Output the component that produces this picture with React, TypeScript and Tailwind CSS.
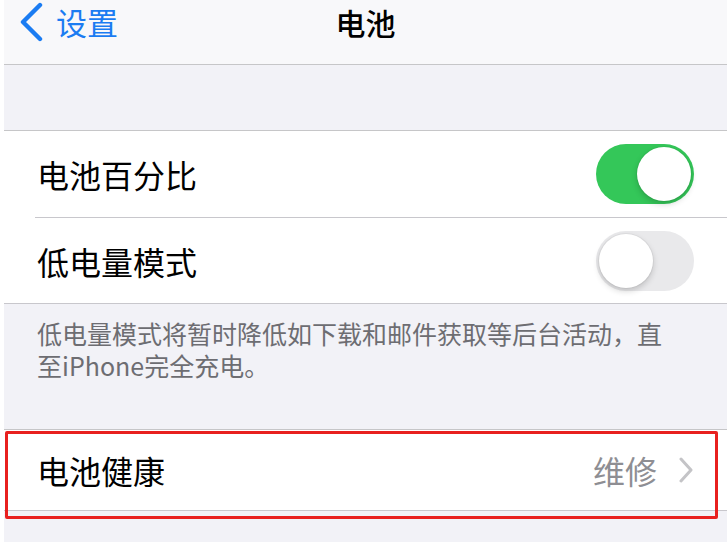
import React from "react";

const font = { fontFamily: '"Noto Sans CJK SC", "Noto Sans", sans-serif' };

function Toggle({ on }: { on: boolean }) {
    return (
        <div
            className={`relative h-[60px] w-[98px] rounded-full ${
                on ? "bg-[#34c759]" : "bg-[#e9e9eb]"
            }`}
        >
            <div
                className={`absolute top-[3px] h-[54px] w-[54px] rounded-full bg-white shadow-[0_3px_6px_rgba(0,0,0,0.18),0_0_0_1px_rgba(0,0,0,0.04)] ${
                    on ? "left-[41px]" : "left-[3px]"
                }`}
            />
        </div>
    );
}

export default function App() {
    return (
        <div className="w-[727px] h-[542px] overflow-hidden bg-white pl-[4px]" style={font}>
            <div className="h-full bg-[#f2f2f7]">
                {/* Nav bar */}
                <div className="relative flex h-[65px] items-start border-b border-[#c6c6c8] bg-[#f8f8fa]">
                    <div className="flex items-center pl-[15px] pt-[2px] text-[#1b7cf2]">
                        <svg width="26" height="40" viewBox="0 0 26 40" fill="none">
                            <path d="M21 3 L4 20 L21 37" stroke="currentColor" strokeWidth="4.4" strokeLinecap="round" strokeLinejoin="round" />
                        </svg>
                        <span className="ml-[11px] text-[31px] leading-[40px]">设置</span>
                    </div>
                    <div className="absolute left-0 right-0 top-[2px] text-center text-[30px] font-medium leading-[40px] text-black">
                        电池
                    </div>
                </div>

                <div className="h-[66px] border-b border-[#c6c6c8]" />

                {/* Toggles group */}
                <div className="bg-white">
                    <div className="flex h-[86px] items-center justify-between pl-[33px] pr-[33px]">
                        <span className="text-[32px] text-black">电池百分比</span>
                        <Toggle on />
                    </div>
                    <div className="ml-[31px] h-px bg-[#c8c7cc]" />
                    <div className="flex h-[85px] items-center justify-between pl-[33px] pr-[33px]">
                        <span className="text-[32px] text-black">低电量模式</span>
                        <Toggle on={false} />
                    </div>
                </div>
                <div className="h-px bg-[#c8c7cc]" />

                {/* Footer note */}
                <div className="h-[126px] border-b border-[#c6c6c8] pl-[33px] pt-[13px] text-[25px] leading-[32px] text-[#6d6d72]">
                    <p>低电量模式将暂时降低如下载和邮件获取等后台活动，直</p>
                    <p>至iPhone完全充电。</p>
                </div>

                {/* Battery health */}
                <div className="relative">
                    <div className="flex h-[81px] items-center justify-between border-b border-[#c8c7cc] bg-white pl-[33px] pr-[34px]">
                        <span className="text-[32px] text-black">电池健康</span>
                        <div className="flex items-center gap-[22px]">
                            <span className="text-[32px] text-[#8e8e93]">维修</span>
                            <svg width="14" height="26" viewBox="0 0 14 26" fill="none">
                                <path d="M2 2 L12 13 L2 24" stroke="#c4c4c7" strokeWidth="3" strokeLinecap="round" strokeLinejoin="round" />
                            </svg>
                        </div>
                    </div>
                    <div className="pointer-events-none absolute left-[1px] top-[1px] h-[88px] w-[713px] rounded-[2px] border-[3px] border-[#e8201f]" />
                </div>
            </div>
        </div>
    );
}
